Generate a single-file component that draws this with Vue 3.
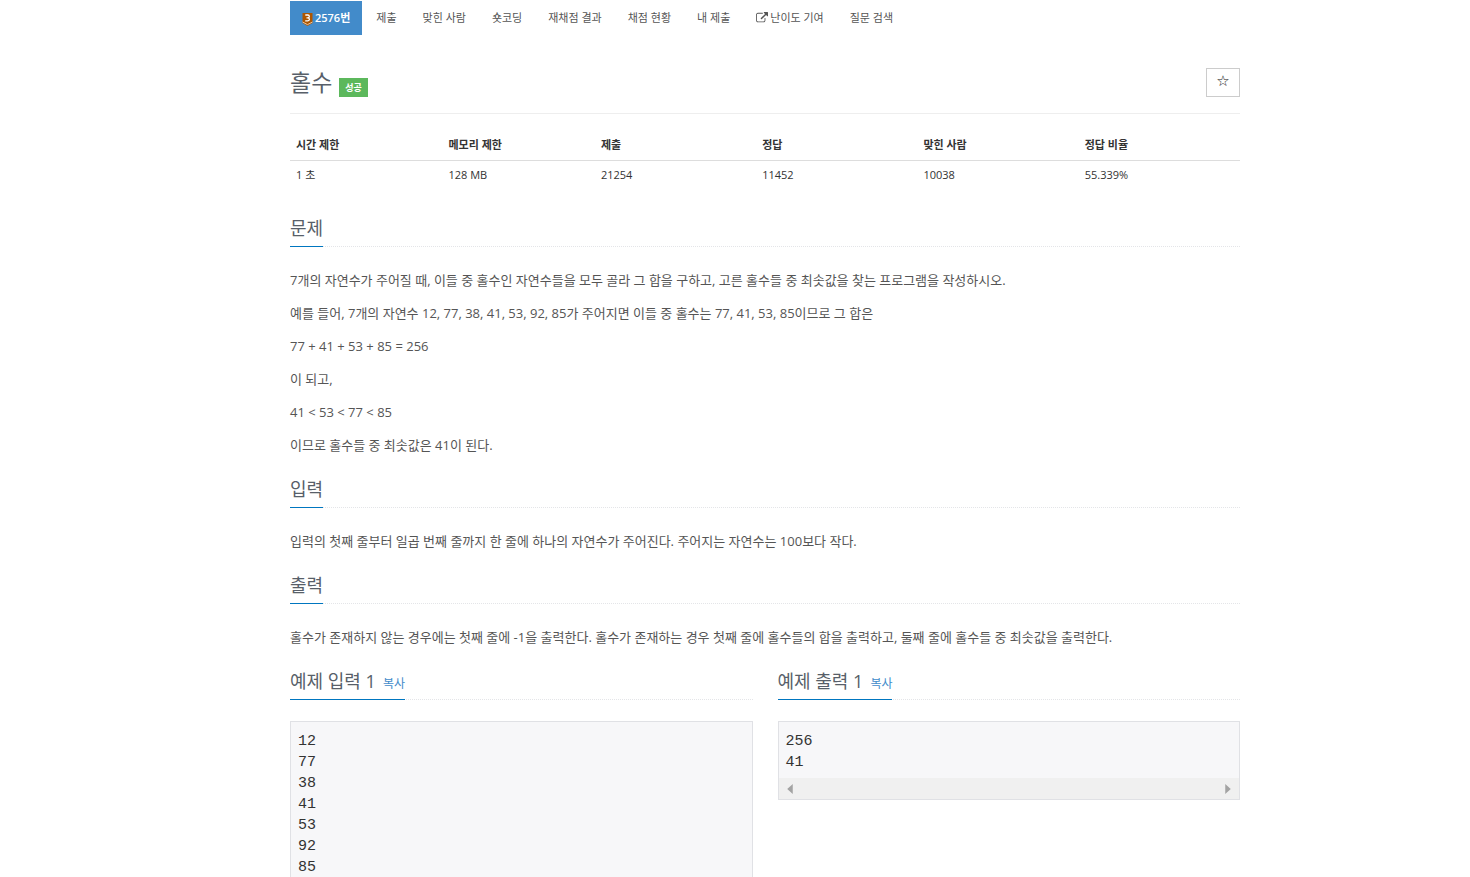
<script setup>
const tabs = [
  { label: '2576번', badge: true, active: true },
  { label: '제출' },
  { label: '맞힌 사람' },
  { label: '숏코딩' },
  { label: '재채점 결과' },
  { label: '채점 현황' },
  { label: '내 제출' },
  { label: '난이도 기여', external: true },
  { label: '질문 검색' },
]

const stats = [
  { name: '시간 제한', value: '1 초' },
  { name: '메모리 제한', value: '128 MB' },
  { name: '제출', value: '21254' },
  { name: '정답', value: '11452' },
  { name: '맞힌 사람', value: '10038' },
  { name: '정답 비율', value: '55.339%' },
]

const sections = [
  {
    title: '문제',
    paragraphs: [
      '7개의 자연수가 주어질 때, 이들 중 홀수인 자연수들을 모두 골라 그 합을 구하고, 고른 홀수들 중 최솟값을 찾는 프로그램을 작성하시오.',
      '예를 들어, 7개의 자연수 12, 77, 38, 41, 53, 92, 85가 주어지면 이들 중 홀수는 77, 41, 53, 85이므로 그 합은',
      '77 + 41 + 53 + 85 = 256',
      '이 되고,',
      '41 < 53 < 77 < 85',
      '이므로 홀수들 중 최솟값은 41이 된다.',
    ],
  },
  {
    title: '입력',
    paragraphs: ['입력의 첫째 줄부터 일곱 번째 줄까지 한 줄에 하나의 자연수가 주어진다. 주어지는 자연수는 100보다 작다.'],
  },
  {
    title: '출력',
    paragraphs: ['홀수가 존재하지 않는 경우에는 첫째 줄에 -1을 출력한다. 홀수가 존재하는 경우 첫째 줄에 홀수들의 합을 출력하고, 둘째 줄에 홀수들 중 최솟값을 출력한다.'],
  },
]

const samples = [
  { title: '예제 입력 1', text: '12\n77\n38\n41\n53\n92\n85' },
  { title: '예제 출력 1', text: '256\n41' },
]
</script>

<template>
  <div class="page">
    <main class="container">
      <nav class="tabs">
        <a v-for="tab in tabs" :key="tab.label" href="#" class="tab" :class="{ active: tab.active }">
          <svg v-if="tab.badge" class="tier" viewBox="0 0 11 13" aria-hidden="true">
            <path d="M0.5 0h10v10L5.500 13 0.500 10z" fill="#ad5600" />
            <path d="M0.500 9 5.500 11.600 10.500 9" fill="none" stroke="#f3d3b0" stroke-width="0.900" />
            <path d="M3.300 2h2.600a1.400 1.400 0 0 1 0 2.800H4.500h1.400a1.500 1.500 0 0 1 0 3H3.200" fill="none" stroke="#fff" stroke-width="1.300" />
          </svg>
          <svg v-if="tab.external" class="external" viewBox="0 0 1792 1792" aria-hidden="true">
            <path
              fill="currentColor"
              d="M1408 928v320q0 119-84.500 203.500T1120 1536H288q-119 0-203.500-84.500T0 1248V416q0-119 84.500-203.500T288 128h704q14 0 23 9t9 23v64q0 14-9 23t-23 9H288q-66 0-113 47t-47 113v832q0 66 47 113t113 47h832q66 0 113-47t47-113V928q0-14 9-23t23-9h64q14 0 23 9t9 23zM1792 64v512q0 26-19 45t-45 19-45-19l-176-176-652 652q-10 10-23 10t-23-10L695 983q-10-10-10-23t10-23l652-652-176-176q-19-19-19-45t19-45 45-19h512q26 0 45 19t19 45z"
            />
          </svg>
          <span>{{ tab.label }}</span>
        </a>
      </nav>

      <header class="page-header">
        <h1>홀수</h1>
        <span class="label">성공</span>
        <button type="button" class="favorite" aria-label="즐겨찾기">☆</button>
      </header>

      <table class="stats">
        <thead>
          <tr>
            <th v-for="s in stats" :key="s.name" scope="col">{{ s.name }}</th>
          </tr>
        </thead>
        <tbody>
          <tr>
            <td v-for="s in stats" :key="s.name">{{ s.value }}</td>
          </tr>
        </tbody>
      </table>

      <section v-for="section in sections" :key="section.title" class="section">
        <div class="headline"><h2>{{ section.title }}</h2></div>
        <p v-for="p in section.paragraphs" :key="p">{{ p }}</p>
      </section>

      <div class="samples">
        <section v-for="sample in samples" :key="sample.title">
          <div class="headline">
            <h2>{{ sample.title }}<button type="button" class="copy">복사</button></h2>
          </div>
          <div class="sample">
            <pre>{{ sample.text }}</pre>
            <div class="scrollbar" aria-hidden="true">
              <svg viewBox="0 0 5 9"><path d="M5 0v9L0 4.500z" /></svg>
              <svg viewBox="0 0 5 9"><path d="M0 0v9L5 4.500z" /></svg>
            </div>
          </div>
        </section>
      </div>
    </main>
  </div>
</template>

<style>
body {
  background: #fff;
}
</style>

<style scoped>
.page {
  box-sizing: border-box;
  height: 100vh;
  overflow: hidden;
  padding: 1px 0 0 60px;
  color: #333;
  font: 11px/18px "Open Sans", "Noto Sans CJK KR", sans-serif;
}
.container {
  max-width: 950px;
  margin: 0 auto;
}
.tabs {
  display: flex;
  gap: 2px;
}
.tab {
  display: flex;
  align-items: center;
  gap: 2px;
  padding: 8px 12px;
  color: #555;
  text-decoration: none;
}
.tab.active {
  background: #428bca;
  color: #fff;
  font-weight: 600;
}
.tier {
  width: 11px;
  height: 13px;
  margin-top: 2px;
}
.external {
  width: 12px;
  height: 12px;
}
.page-header {
  display: flex;
  align-items: flex-end;
  gap: 7px;
  margin-top: 33px;
  padding-bottom: 16px;
  border-bottom: 1px solid #eee;
}
h1,
h2 {
  margin: 0;
  color: #585f69;
  font-weight: 400;
}
h1 {
  font-size: 23px;
  line-height: 29px;
}
.label {
  padding: 0 6px;
  background: #5cb85c;
  color: #fff;
  font-size: 9px;
  font-weight: 700;
  line-height: 19px;
}
.favorite {
  width: 34px;
  height: 29px;
  margin-left: auto;
  padding: 0 0 4px;
  border: 1px solid #ccc;
  background: #fff;
  color: #111;
  font: bold 15px/20px "DejaVu Sans", sans-serif;
}
.stats {
  width: 100%;
  margin: 16px 0 25px;
  border-collapse: collapse;
  table-layout: fixed;
}
.stats th,
.stats td {
  width: 17%;
  padding: 6px;
  line-height: 18px;
  text-align: left;
}
.stats th {
  border-bottom: 1px solid #ddd;
  font-weight: 700;
}
.stats td {
  padding: 5px 6px;
}
.stats th:nth-child(-n + 2) {
  width: 16%;
}
.headline {
  display: flex;
  margin-bottom: 21px;
  border-bottom: 1px dotted #e4e5e8;
}
h2 {
  margin-bottom: -1px;
  padding-bottom: 4px;
  border-bottom: 1px solid #0076c0;
  font-size: 18px;
  line-height: 28px;
}
.section {
  margin-bottom: 18px;
}
p {
  margin: 0;
  color: #555;
  font-size: 13px;
  line-height: 24px;
}
p + p {
  margin-top: 9px;
}
.copy {
  margin-left: 7px;
  padding: 0;
  border: 0;
  background: none;
  color: #428bca;
  font: inherit;
  font-size: 12px;
  line-height: 16px;
}
.samples {
  display: grid;
  grid-template-columns: 1fr 1fr;
  align-items: start;
  gap: 25px;
}
.sample {
  border: 1px solid #e0e1e5;
  background: #f7f7f9;
}
pre {
  margin: 0;
  padding: 9px 7px 5px;
  font: 15px/21px "Liberation Mono", monospace;
}
.scrollbar {
  display: flex;
  align-items: center;
  justify-content: space-between;
  height: 21px;
  padding: 0 8px;
  background: #f0f0f0;
}
.scrollbar svg {
  width: 6px;
  height: 10px;
  fill: #a3a3a3;
}
</style>
